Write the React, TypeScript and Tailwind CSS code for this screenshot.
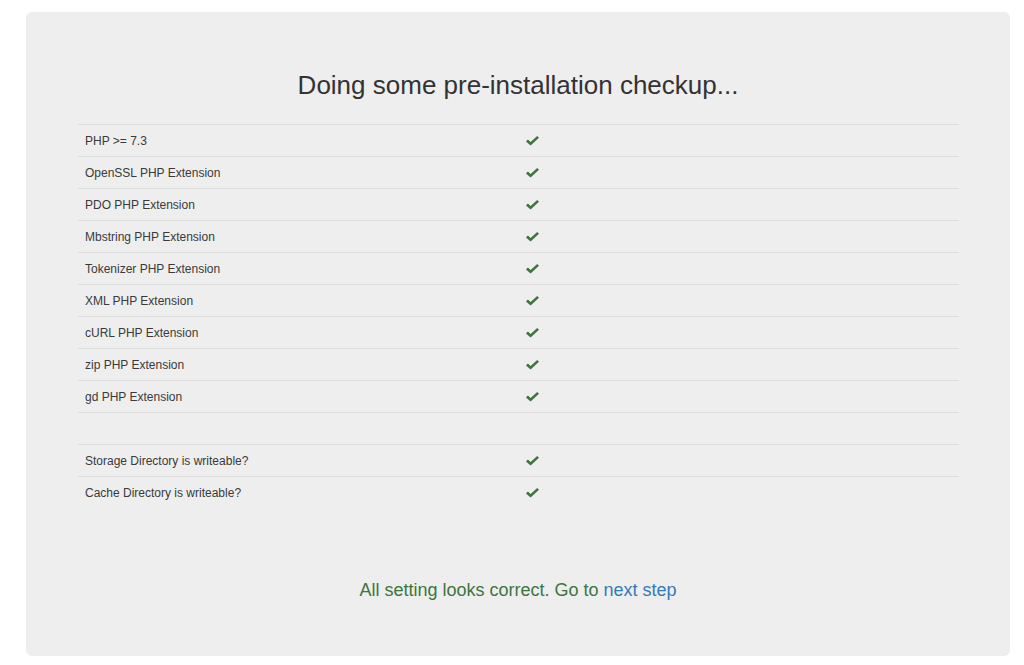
const checks = [
  'PHP >= 7.3',
  'OpenSSL PHP Extension',
  'PDO PHP Extension',
  'Mbstring PHP Extension',
  'Tokenizer PHP Extension',
  'XML PHP Extension',
  'cURL PHP Extension',
  'zip PHP Extension',
  'gd PHP Extension',
];

const dirs = ['Storage Directory is writeable?', 'Cache Directory is writeable?'];

const Ok = () => (
  <svg width="13" height="10" viewBox="0 0 13 10" className="block">
    <polygon points="0,5.4 1.9,3.6 4.6,6 11.2,0 13,1.8 4.6,9.6" fill="#3c763d" />
  </svg>
);

const Row = ({ label, ok = true }: { label?: string; ok?: boolean }) => (
  <div className="grid grid-cols-2 h-[32px] border-t border-[#dddddd]">
    <div className="flex items-center px-[7px]">{label}</div>
    <div className="flex items-center px-[7px]">{label && ok ? <Ok /> : null}</div>
  </div>
);

export default function App() {
  return (
    <div className="min-h-[665px] bg-white pt-[12px] pl-[26px]" style={{ fontFamily: '"Liberation Sans", Arial, sans-serif' }}>
      <div className="w-[984px] h-[644px] bg-[#eeeeee] rounded-[6px] pt-[59px] px-[52px] text-[#333333]">
        <h1 className="text-center text-[26px] leading-[28px] font-normal">Doing some pre-installation checkup...</h1>
        <div className="mt-[25px] w-[881px] text-[12px] text-[#3a3a3a]">
          {checks.map((c) => (
            <Row key={c} label={c} />
          ))}
          <Row />
          {dirs.map((d) => (
            <Row key={d} label={d} />
          ))}
        </div>
        <p className="mt-[69px] text-center text-[18px] leading-[26px] text-[#3c763d]">
          All setting looks correct. Go to{' '}
          <a href="#" className="text-[#337ab7]">
            next step
          </a>
        </p>
      </div>
    </div>
  );
}
